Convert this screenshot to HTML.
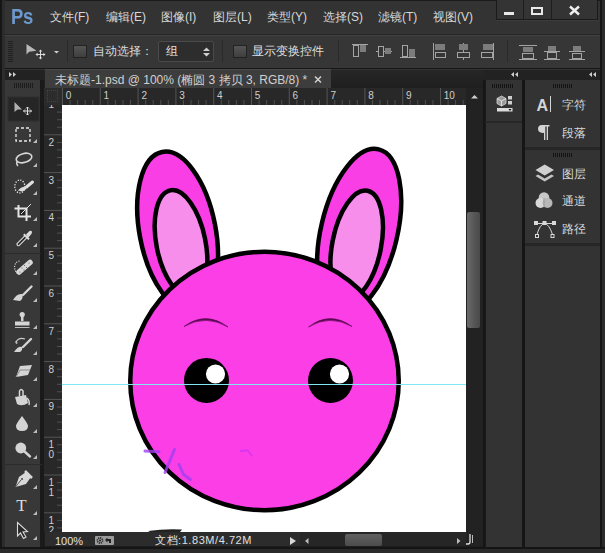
<!DOCTYPE html>
<html><head><meta charset="utf-8">
<style>
*{margin:0;padding:0;box-sizing:border-box}
html,body{width:605px;height:553px;overflow:hidden;background:#1e1e1e;font-family:"Liberation Sans",sans-serif;color:#d6d6d6}
.a{position:absolute}
.t{position:absolute;white-space:nowrap;line-height:1}
.mi{position:absolute;top:11px;font-size:12px;color:#d8d8d8;white-space:nowrap;line-height:1}
svg{position:absolute;overflow:visible}
</style></head><body>
<!-- window frame -->
<div class="a" style="left:0;top:0;width:605px;height:553px;background:#1c1c1c"></div>
<!-- menubar -->
<div class="a" style="left:3px;top:1px;width:598px;height:33px;background:#333"></div>
<div class="a" style="left:3px;top:34px;width:598px;height:1px;background:#262626"></div>
<div class="a" style="left:11px;top:7px;font-size:21.5px;font-weight:bold;color:#6d98cc;letter-spacing:-0.3px;line-height:1;transform:scaleX(0.86);transform-origin:left top">Ps</div>
<div class="mi" style="left:50px">文件(F)</div>
<div class="mi" style="left:106px">编辑(E)</div>
<div class="mi" style="left:161px">图像(I)</div>
<div class="mi" style="left:213px">图层(L)</div>
<div class="mi" style="left:267px">类型(Y)</div>
<div class="mi" style="left:323px">选择(S)</div>
<div class="mi" style="left:378px">滤镜(T)</div>
<div class="mi" style="left:433px">视图(V)</div>
<!-- window buttons -->
<div class="a" style="left:496px;top:0;width:102px;height:20px;background:#343434;border:1px solid #1a1a1a;border-top:none;box-shadow:0 1px 0 #3c3c3c"></div>
<div class="a" style="left:523px;top:0;width:1px;height:19px;background:#1e1e1e"></div>
<div class="a" style="left:551px;top:0;width:1px;height:19px;background:#1e1e1e"></div>
<div class="a" style="left:504px;top:12px;width:10px;height:3px;background:#e8e8e8"></div>
<div class="a" style="left:531px;top:7px;width:12px;height:8px;border:2px solid #e8e8e8;border-top-width:2px"></div>
<svg style="left:569px;top:6px" width="11" height="9"><path d="M1 0.5L10 8.5M10 0.5L1 8.5" stroke="#eee" stroke-width="2.4"/></svg>

<!-- options bar -->
<div class="a" style="left:3px;top:35px;width:598px;height:33px;background:#363636;border-top:1px solid #424242"></div>
<div class="a" style="left:3px;top:68px;width:598px;height:1px;background:#161616"></div>
<svg style="left:8px;top:41px" width="6" height="23"><g fill="#202020"><rect x="0" y="0" width="5" height="1"/><rect x="0" y="2" width="5" height="1"/><rect x="0" y="4" width="5" height="1"/><rect x="0" y="6" width="5" height="1"/><rect x="0" y="8" width="5" height="1"/><rect x="0" y="10" width="5" height="1"/><rect x="0" y="12" width="5" height="1"/><rect x="0" y="14" width="5" height="1"/><rect x="0" y="16" width="5" height="1"/><rect x="0" y="18" width="5" height="1"/><rect x="0" y="20" width="5" height="1"/></g></svg>
<svg style="left:26px;top:43px" width="34" height="16"><path d="M0.5 1L0.5 11.5L3.2 8.8L10.5 7.8Z" fill="#b8b8b8"/><path d="M14.5 7.5V15.5M10.5 11.5H18.5" stroke="#dcdcdc" stroke-width="1"/><path d="M14.5 6.5L16.3 8.6H12.7ZM14.5 16.5L16.3 14.4H12.7ZM9.5 11.5L11.6 9.7V13.3ZM19.5 11.5L17.4 9.7V13.3Z" fill="#dcdcdc"/><path d="M28 8H33L30.5 10.5Z" fill="#cfcfcf"/></svg>
<div class="a" style="left:67px;top:40px;width:1px;height:22px;background:#2a2a2a"></div>
<div class="a" style="left:73px;top:45px;width:14px;height:13px;background:linear-gradient(#555,#3e3e3e);border:1px solid #222"></div>
<div class="t" style="left:93px;top:45px;font-size:12px;color:#dcdcdc">自动选择：</div>
<div class="a" style="left:158px;top:41px;width:56px;height:21px;background:#2d2d2d;border:1px solid #4a4a4a;border-radius:2px"></div>
<div class="t" style="left:166px;top:45px;font-size:12px;color:#e0e0e0">组</div>
<svg style="left:202px;top:47px" width="9" height="10"><path d="M1 4L4.5 0.5L8 4ZM1 6L4.5 9.5L8 6Z" fill="#cfcfcf"/></svg>
<div class="a" style="left:222px;top:40px;width:1px;height:22px;background:#2a2a2a"></div>
<div class="a" style="left:233px;top:45px;width:14px;height:13px;background:linear-gradient(#555,#3e3e3e);border:1px solid #222"></div>
<div class="t" style="left:252px;top:45px;font-size:12px;color:#dcdcdc">显示变换控件</div>
<div class="a" style="left:338px;top:40px;width:1px;height:22px;background:#2a2a2a"></div>
<svg style="left:350px;top:43px" width="250" height="18" fill="none" stroke="#a4a4a4" stroke-width="1">
  <!-- align top -->
  <path d="M2 1.5H18"/><rect x="3.5" y="2.5" width="5" height="11"/><rect x="10" y="2" width="6" height="7" fill="#7c7c7c" stroke="none"/>
  <!-- align vcenter -->
  <path d="M26 8.5H42"/><rect x="28.5" y="3.5" width="5" height="10" fill="#363636"/><rect x="35" y="5" width="6" height="6" fill="#7c7c7c" stroke="none"/>
  <!-- align bottom -->
  <path d="M50 14.5H66"/><rect x="52.5" y="2.5" width="5" height="11"/><rect x="59" y="6" width="6" height="8" fill="#7c7c7c" stroke="none"/>
  <!-- align left -->
  <path d="M83.5 0V17"/><rect x="85" y="1" width="10" height="6" fill="#7c7c7c" stroke="none"/><rect x="85.5" y="9.5" width="10" height="5"/>
  <!-- align hcenter -->
  <path d="M113.5 0V17"/><rect x="109" y="1" width="9" height="6" fill="#7c7c7c" stroke="none"/><rect x="107.5" y="9.5" width="12" height="5" fill="#363636"/>
  <!-- align right -->
  <path d="M143.5 0V17"/><rect x="133" y="1" width="10" height="6" fill="#7c7c7c" stroke="none"/><rect x="131.5" y="9.5" width="11" height="5"/>
  <!-- distribute -->
  <path d="M169 2.5H187M169 16.5H187"/><rect x="173" y="4" width="10" height="5" fill="#7c7c7c" stroke="none"/><rect x="172.5" y="10.5" width="11" height="5"/>
  <path d="M194 8.5H210M194 16.5H210"/><rect x="198" y="3" width="8" height="5" fill="#7c7c7c" stroke="none"/><rect x="197.5" y="9.5" width="9" height="6"/>
  <path d="M219 8.5H235M219 16.5H235"/><rect x="223" y="3" width="8" height="5" fill="#7c7c7c" stroke="none"/><rect x="222.5" y="10.5" width="9" height="5"/>
</svg>
<div class="a" style="left:507px;top:40px;width:1px;height:22px;background:#2a2a2a"></div>

<!-- panel strip -->
<div class="a" style="left:3px;top:69px;width:598px;height:11px;background:#222;border-top:1px solid #333"></div>
<svg style="left:9px;top:72px" width="8" height="6"><path d="M0 0L3 2.5L0 5ZM4 0L7 2.5L4 5Z" fill="#cfcfcf"/></svg>
<svg style="left:510px;top:72px" width="9" height="6"><path d="M8 0L5 2.5L8 5ZM4 0L1 2.5L4 5Z" fill="#cfcfcf"/></svg>
<svg style="left:588px;top:72px" width="9" height="6"><path d="M8 0L5 2.5L8 5ZM4 0L1 2.5L4 5Z" fill="#cfcfcf"/></svg>

<!-- document tab area -->
<div class="a" style="left:44px;top:69px;width:440px;height:19px;background:linear-gradient(#262626,#1f1f1f);border-top:1px solid #333"></div>
<div class="a" style="left:45px;top:69px;width:286px;height:19px;background:#3d3d3d;border-top:1px solid #4a4a4a"></div>
<div class="t" style="left:55px;top:74px;font-size:12px;color:#d0d0d0">未标题-1.psd @ 100% (椭圆 3 拷贝 3, RGB/8) *</div>
<svg style="left:314px;top:76px" width="8" height="7"><path d="M1 0.5L7 6.5M7 0.5L1 6.5" stroke="#d0d0d0" stroke-width="1.5"/></svg>

<!-- rulers -->
<div class="a" id="hr" style="left:44px;top:88px;width:422px;height:17px;background:#282828"></div>
<div class="a" id="vr" style="left:44px;top:105px;width:18px;height:427px;background:#282828"></div>
<svg id="rulers" style="left:0;top:0" width="605" height="553"><g font-family="Liberation Sans"><rect x="62.0" y="88" width="1" height="17" fill="#555"/><rect x="69.6" y="100" width="1" height="5" fill="#505050"/><rect x="77.1" y="100" width="1" height="5" fill="#505050"/><rect x="84.7" y="100" width="1" height="5" fill="#505050"/><rect x="92.2" y="100" width="1" height="5" fill="#505050"/><text x="65.8" y="99" font-size="10" fill="#cfcfcf">0</text><rect x="99.8" y="88" width="1" height="17" fill="#555"/><rect x="107.4" y="100" width="1" height="5" fill="#505050"/><rect x="114.9" y="100" width="1" height="5" fill="#505050"/><rect x="122.5" y="100" width="1" height="5" fill="#505050"/><rect x="130.0" y="100" width="1" height="5" fill="#505050"/><text x="103.6" y="99" font-size="10" fill="#cfcfcf">1</text><rect x="137.6" y="88" width="1" height="17" fill="#555"/><rect x="145.2" y="100" width="1" height="5" fill="#505050"/><rect x="152.7" y="100" width="1" height="5" fill="#505050"/><rect x="160.3" y="100" width="1" height="5" fill="#505050"/><rect x="167.8" y="100" width="1" height="5" fill="#505050"/><text x="141.4" y="99" font-size="10" fill="#cfcfcf">2</text><rect x="175.4" y="88" width="1" height="17" fill="#555"/><rect x="183.0" y="100" width="1" height="5" fill="#505050"/><rect x="190.5" y="100" width="1" height="5" fill="#505050"/><rect x="198.1" y="100" width="1" height="5" fill="#505050"/><rect x="205.6" y="100" width="1" height="5" fill="#505050"/><text x="179.2" y="99" font-size="10" fill="#cfcfcf">3</text><rect x="213.2" y="88" width="1" height="17" fill="#555"/><rect x="220.8" y="100" width="1" height="5" fill="#505050"/><rect x="228.3" y="100" width="1" height="5" fill="#505050"/><rect x="235.9" y="100" width="1" height="5" fill="#505050"/><rect x="243.4" y="100" width="1" height="5" fill="#505050"/><text x="217.0" y="99" font-size="10" fill="#cfcfcf">4</text><rect x="251.0" y="88" width="1" height="17" fill="#555"/><rect x="258.6" y="100" width="1" height="5" fill="#505050"/><rect x="266.1" y="100" width="1" height="5" fill="#505050"/><rect x="273.7" y="100" width="1" height="5" fill="#505050"/><rect x="281.2" y="100" width="1" height="5" fill="#505050"/><text x="254.8" y="99" font-size="10" fill="#cfcfcf">5</text><rect x="288.8" y="88" width="1" height="17" fill="#555"/><rect x="296.4" y="100" width="1" height="5" fill="#505050"/><rect x="303.9" y="100" width="1" height="5" fill="#505050"/><rect x="311.5" y="100" width="1" height="5" fill="#505050"/><rect x="319.0" y="100" width="1" height="5" fill="#505050"/><text x="292.6" y="99" font-size="10" fill="#cfcfcf">6</text><rect x="326.6" y="88" width="1" height="17" fill="#555"/><rect x="334.2" y="100" width="1" height="5" fill="#505050"/><rect x="341.7" y="100" width="1" height="5" fill="#505050"/><rect x="349.3" y="100" width="1" height="5" fill="#505050"/><rect x="356.8" y="100" width="1" height="5" fill="#505050"/><text x="330.4" y="99" font-size="10" fill="#cfcfcf">7</text><rect x="364.4" y="88" width="1" height="17" fill="#555"/><rect x="372.0" y="100" width="1" height="5" fill="#505050"/><rect x="379.5" y="100" width="1" height="5" fill="#505050"/><rect x="387.1" y="100" width="1" height="5" fill="#505050"/><rect x="394.6" y="100" width="1" height="5" fill="#505050"/><text x="368.2" y="99" font-size="10" fill="#cfcfcf">8</text><rect x="402.2" y="88" width="1" height="17" fill="#555"/><rect x="409.8" y="100" width="1" height="5" fill="#505050"/><rect x="417.3" y="100" width="1" height="5" fill="#505050"/><rect x="424.9" y="100" width="1" height="5" fill="#505050"/><rect x="432.4" y="100" width="1" height="5" fill="#505050"/><text x="406.0" y="99" font-size="10" fill="#cfcfcf">9</text><rect x="440.0" y="88" width="1" height="17" fill="#555"/><rect x="447.6" y="100" width="1" height="5" fill="#505050"/><rect x="455.1" y="100" width="1" height="5" fill="#505050"/><rect x="462.7" y="100" width="1" height="5" fill="#505050"/><text x="443.8" y="99" font-size="10" fill="#cfcfcf">10</text><rect x="54.4" y="100" width="1" height="5" fill="#505050"/><rect x="46.9" y="100" width="1" height="5" fill="#505050"/><rect x="57" y="111.6" width="5" height="1" fill="#505050"/><rect x="57" y="119.2" width="5" height="1" fill="#505050"/><rect x="57" y="126.7" width="5" height="1" fill="#505050"/><text x="48.5" y="108.0" font-size="10" fill="#cfcfcf">1</text><rect x="44" y="134.3" width="18" height="1" fill="#555"/><rect x="57" y="141.9" width="5" height="1" fill="#505050"/><rect x="57" y="149.4" width="5" height="1" fill="#505050"/><rect x="57" y="157.0" width="5" height="1" fill="#505050"/><rect x="57" y="164.5" width="5" height="1" fill="#505050"/><text x="48.5" y="145.8" font-size="10" fill="#cfcfcf">2</text><rect x="44" y="172.1" width="18" height="1" fill="#555"/><rect x="57" y="179.7" width="5" height="1" fill="#505050"/><rect x="57" y="187.2" width="5" height="1" fill="#505050"/><rect x="57" y="194.8" width="5" height="1" fill="#505050"/><rect x="57" y="202.3" width="5" height="1" fill="#505050"/><text x="48.5" y="183.6" font-size="10" fill="#cfcfcf">3</text><rect x="44" y="209.9" width="18" height="1" fill="#555"/><rect x="57" y="217.5" width="5" height="1" fill="#505050"/><rect x="57" y="225.0" width="5" height="1" fill="#505050"/><rect x="57" y="232.6" width="5" height="1" fill="#505050"/><rect x="57" y="240.1" width="5" height="1" fill="#505050"/><text x="48.5" y="221.4" font-size="10" fill="#cfcfcf">4</text><rect x="44" y="247.7" width="18" height="1" fill="#555"/><rect x="57" y="255.3" width="5" height="1" fill="#505050"/><rect x="57" y="262.8" width="5" height="1" fill="#505050"/><rect x="57" y="270.4" width="5" height="1" fill="#505050"/><rect x="57" y="277.9" width="5" height="1" fill="#505050"/><text x="48.5" y="259.2" font-size="10" fill="#cfcfcf">5</text><rect x="44" y="285.5" width="18" height="1" fill="#555"/><rect x="57" y="293.1" width="5" height="1" fill="#505050"/><rect x="57" y="300.6" width="5" height="1" fill="#505050"/><rect x="57" y="308.2" width="5" height="1" fill="#505050"/><rect x="57" y="315.7" width="5" height="1" fill="#505050"/><text x="48.5" y="297.0" font-size="10" fill="#cfcfcf">6</text><rect x="44" y="323.3" width="18" height="1" fill="#555"/><rect x="57" y="330.9" width="5" height="1" fill="#505050"/><rect x="57" y="338.4" width="5" height="1" fill="#505050"/><rect x="57" y="346.0" width="5" height="1" fill="#505050"/><rect x="57" y="353.5" width="5" height="1" fill="#505050"/><text x="48.5" y="334.8" font-size="10" fill="#cfcfcf">7</text><rect x="44" y="361.1" width="18" height="1" fill="#555"/><rect x="57" y="368.7" width="5" height="1" fill="#505050"/><rect x="57" y="376.2" width="5" height="1" fill="#505050"/><rect x="57" y="383.8" width="5" height="1" fill="#505050"/><rect x="57" y="391.3" width="5" height="1" fill="#505050"/><text x="48.5" y="372.6" font-size="10" fill="#cfcfcf">8</text><rect x="44" y="398.9" width="18" height="1" fill="#555"/><rect x="57" y="406.5" width="5" height="1" fill="#505050"/><rect x="57" y="414.0" width="5" height="1" fill="#505050"/><rect x="57" y="421.6" width="5" height="1" fill="#505050"/><rect x="57" y="429.1" width="5" height="1" fill="#505050"/><text x="48.5" y="410.4" font-size="10" fill="#cfcfcf">9</text><rect x="44" y="436.7" width="18" height="1" fill="#555"/><rect x="57" y="444.3" width="5" height="1" fill="#505050"/><rect x="57" y="451.8" width="5" height="1" fill="#505050"/><rect x="57" y="459.4" width="5" height="1" fill="#505050"/><rect x="57" y="466.9" width="5" height="1" fill="#505050"/><text x="48.5" y="448.2" font-size="10" fill="#cfcfcf">1</text><text x="48.5" y="458.2" font-size="10" fill="#cfcfcf">0</text><rect x="44" y="474.5" width="18" height="1" fill="#555"/><rect x="57" y="482.1" width="5" height="1" fill="#505050"/><rect x="57" y="489.6" width="5" height="1" fill="#505050"/><rect x="57" y="497.2" width="5" height="1" fill="#505050"/><rect x="57" y="504.7" width="5" height="1" fill="#505050"/><text x="48.5" y="486.0" font-size="10" fill="#cfcfcf">1</text><text x="48.5" y="496.0" font-size="10" fill="#cfcfcf">1</text><rect x="44" y="512.3" width="18" height="1" fill="#555"/><rect x="57" y="519.9" width="5" height="1" fill="#505050"/><rect x="57" y="527.4" width="5" height="1" fill="#505050"/><text x="48.5" y="523.8" font-size="10" fill="#cfcfcf">1</text><text x="48.5" y="533.8" font-size="10" fill="#cfcfcf">2</text></g></svg>

<div class="a" style="left:44px;top:88px;width:18px;height:17px;background:#2c2c2c"><div class="a" style="left:3px;top:2px;width:11px;height:12px;border:1px dotted #444"></div></div>
<!-- canvas -->
<div id="canvas" class="a" style="left:62px;top:105px;width:404px;height:427px;background:#fff;overflow:hidden"><svg width="404" height="427" viewBox="62 105 404 427" style="position:absolute;left:0;top:0">
<g stroke="#000" stroke-width="4.5">
<ellipse cx="177.6" cy="231.3" rx="38" ry="80.8" transform="rotate(-11 177.6 231.3)" fill="#fa3ee6"/>
<ellipse cx="181" cy="243.5" rx="24.5" ry="54.2" transform="rotate(-11.4 181 243.5)" fill="#f88eec"/>
<ellipse cx="359.2" cy="231.3" rx="38.2" ry="84.2" transform="rotate(13.4 359.2 231.3)" fill="#fa3ee6"/>
<ellipse cx="356.7" cy="245" rx="24.4" ry="55.3" transform="rotate(11.2 356.7 245)" fill="#f88eec"/>
<ellipse cx="264.5" cy="381" rx="134.25" ry="129.25" fill="#fb3ee6"/>
</g>
<circle cx="206.5" cy="380.4" r="22.5" fill="#000"/>
<circle cx="330.5" cy="380.5" r="22.5" fill="#000"/>
<circle cx="215.5" cy="374" r="9.6" fill="#fff"/>
<circle cx="339.5" cy="374" r="9.6" fill="#fff"/>
<path d="M184 326.5Q205.8 310.5 228 327Q205.8 314 184 326.5Z" fill="#5a0a52" stroke="#5a0a52" stroke-width="0.6"/>
<path d="M308.5 327Q329.8 310.5 352 326.5Q329.8 314 308.5 327Z" fill="#5a0a52" stroke="#5a0a52" stroke-width="0.6"/>
<filter id="bl"><feGaussianBlur stdDeviation="0.7"/></filter><g stroke="#a040f0" stroke-width="3" fill="none" stroke-linecap="round" stroke-linejoin="round" filter="url(#bl)" opacity="0.8">
<path d="M145 451L159 451.8"/><path d="M174.5 449.5Q171 458 165 472.5"/><path d="M179 464.5L183.5 474.5L190.5 479.5"/>
<path d="M240.6 451L247.5 450.3L251.8 455.5" stroke="#c830f0" stroke-width="1.8" opacity="0.8"/>
</g>
<path d="M148 531Q165 528.5 182 529.5L180 532H150Z" fill="#222"/>
<line x1="62" y1="384.5" x2="466" y2="384.5" stroke="#7fe8f2" stroke-width="1"/>
</svg></div>

<!-- vertical scrollbar -->
<div class="a" style="left:466px;top:88px;width:17px;height:458px;background:#222"></div>
<svg style="left:471px;top:95px" width="7" height="4"><path d="M0 3.5L3.5 0L7 3.5Z" fill="#d0d0d0"/></svg>
<div class="a" style="left:467px;top:212px;width:13px;height:116px;background:linear-gradient(90deg,#6a6a6a,#555 60%,#4a4a4a);border-radius:2px"></div>
<div class="a" style="left:483px;top:80px;width:2px;height:473px;background:#161616"></div>

<!-- status bar -->
<div class="a" style="left:45px;top:532px;width:421px;height:14px;background:#2c2c2c"></div>
<div class="t" style="left:55px;top:536px;font-size:11px;color:#e0e0e0">100%</div>
<div class="a" style="left:95px;top:536px;width:19px;height:9px;background:#9c9c9c;border-radius:1px"></div>
<svg style="left:95px;top:536px" width="19" height="9"><circle cx="5" cy="4.5" r="2.6" fill="none" stroke="#222" stroke-width="1.6" stroke-dasharray="1.2 0.8"/><circle cx="5" cy="4.5" r="1" fill="#222"/><path d="M10 4L12.5 1.5V3H16V7H14V5H12.5V6.5Z" fill="#222"/></svg>
<div class="t" style="left:155px;top:535px;font-size:11px;color:#e0e0e0;letter-spacing:0.55px">文档:1.83M/4.72M</div>
<svg style="left:290px;top:537px" width="7" height="8"><path d="M0 0L6 4L0 8Z" fill="#d8d8d8"/></svg>
<div class="a" style="left:300px;top:532px;width:166px;height:14px;background:#262626"></div>
<svg style="left:305px;top:538px" width="4" height="6"><path d="M3.5 0L0 3L3.5 6Z" fill="#bbb"/></svg>
<div class="a" style="left:345px;top:534px;width:37px;height:12px;background:linear-gradient(#606060,#4c4c4c);border-radius:2px"></div>
<svg style="left:457px;top:538px" width="4" height="6"><path d="M0 0L3.5 3L0 6Z" fill="#bbb"/></svg>
<div class="a" style="left:45px;top:546px;width:438px;height:7px;background:#1e1e1e"></div>

<!-- tools panel -->
<div class="a" style="left:4px;top:80px;width:37px;height:473px;background:#383838;border-left:1px solid #444"></div>
<div class="a" style="left:40px;top:80px;width:4px;height:473px;background:#1a1a1a"></div>
<svg id="tools" style="left:0;top:0" width="50" height="553">
<rect x="8" y="97" width="31" height="24" fill="#262626" stroke="#2e2e2e"/>
<path d="M14.5 102V112L17.5 109.5L22 109.5Z" fill="#b0b0b0"/>
<g stroke="#e0e0e0" stroke-width="1" fill="none"><path d="M27.5 107V115M23.5 111H31.5"/><path d="M26 108.5L27.5 107L29 108.5M26 113.5L27.5 115L29 113.5M25 109.5L23.5 111L25 112.5M30 109.5L31.5 111L30 112.5"/></g>
<rect x="16" y="128" width="14" height="13" fill="none" stroke="#e8e8e8" stroke-width="1.3" stroke-dasharray="3 2"/>
<ellipse cx="24" cy="158" rx="8" ry="4.5" transform="rotate(-15 24 158)" fill="none" stroke="#d8d8d8" stroke-width="1.6"/>
<path d="M17 161.5Q16 164 18 166" stroke="#d8d8d8" stroke-width="1.4" fill="none"/>
<ellipse cx="19.8" cy="186.5" rx="5" ry="6.5" fill="none" stroke="#f0f0f0" stroke-width="1.3" stroke-dasharray="1.2 1.5"/>
<path d="M32.5 182L26.5 187" stroke="#e0e0e0" stroke-width="3" stroke-linecap="round"/><path d="M18 190.5Q21 186.5 26.5 186.5Q27 190 22 191.5Z" fill="#dcdcdc"/>
<rect x="19" y="209" width="7" height="7" fill="#222"/><g stroke="#e4e4e4" stroke-width="2" fill="none"><path d="M18.5 205V216.5H31M14.5 208.5H26.5V221"/><path d="M21 214L31 204" stroke-width="1"/></g>
<path d="M17.5 245.5L16.8 243.8L25 235.6L27 237.6L18.8 245.8Z" fill="#2a2a2a" stroke="#dcdcdc" stroke-width="1.1" stroke-linejoin="round"/><path d="M23.8 234.2L29 239.4" stroke="#dcdcdc" stroke-width="2"/><path d="M26 234.5L29.5 231Q31.5 230 32 232Q32 233 31 234.5L28 238Z" fill="#dcdcdc"/>
<rect x="5" y="253" width="36" height="1" fill="#2a2a2a"/>
<path d="M19.5 261Q15 262 14.5 267Q15 271.5 17 273" stroke="#e0e0e0" stroke-width="1.1" stroke-dasharray="1.1 1.3" fill="none"/>
<path d="M19 272L30 262.5" stroke="#d8d8d8" stroke-width="5.5" stroke-linecap="round"/>
<g fill="#555"><circle cx="24.5" cy="265.5" r="0.6"/><circle cx="26.5" cy="267.5" r="0.6"/><circle cx="22" cy="268" r="0.6"/><circle cx="24" cy="270" r="0.6"/><circle cx="29" cy="263" r="0.6"/><circle cx="20" cy="272" r="0.6"/></g>
<path d="M31.5 286.5L23 295" stroke="#d4d4d4" stroke-width="2.4" stroke-linecap="round"/><path d="M13 300Q17 293 22 294Q24 298 20 301Z" fill="#d4d4d4"/>
<circle cx="22.2" cy="314.5" r="2.6" fill="#d4d4d4"/><path d="M21 316H23.5V321H21Z" fill="#d4d4d4"/><rect x="15" y="321.5" width="14.5" height="4" fill="#d4d4d4"/><rect x="15" y="327" width="14.5" height="1" fill="#bbb"/>
<path d="M16 342Q19 337 25 339" stroke="#ccc" stroke-width="1.3" fill="none"/><path d="M15 341L18 343L16 344Z" fill="#ccc"/>
<path d="M31 339L23 347" stroke="#d4d4d4" stroke-width="2.4" stroke-linecap="round"/><path d="M14 352Q18 346 22 347Q23 350 20 352Z" fill="#d4d4d4"/>
<path d="M20 366L32 365L28 375L16 377Z" fill="#d4d4d4"/><path d="M16 377L20 370H30" stroke="#8a8a8a" stroke-width="1" fill="none"/>
<path d="M19.5 396V391Q21 388 23 391V396" stroke="#d8d8d8" stroke-width="1.5" fill="none"/>
<path d="M15 397L26 395L28 403Q22 407 17 404Z" fill="#d4d4d4"/><path d="M27 398Q30 401 29 405" stroke="#d4d4d4" stroke-width="1.5" fill="none"/>
<path d="M22 416Q28 424 28 426Q28 431 22 431Q16 431 16 426Q16 424 22 416Z" fill="#d4d4d4"/>
<circle cx="20.8" cy="448" r="5.4" fill="#d4d4d4"/><path d="M24 451L30 456.5" stroke="#d4d4d4" stroke-width="2.4" stroke-linecap="round"/>
<rect x="5" y="464" width="37" height="1" fill="#2c2c2c"/>
<path d="M15.5 487L19 477L26 472L31 477L26 484Z" fill="#d8d8d8"/><path d="M25 471L32 478" stroke="#d8d8d8" stroke-width="2.5"/><path d="M15.5 487L21 480" stroke="#555" stroke-width="1"/><circle cx="22" cy="479" r="1" fill="#444"/>
<text x="16.3" y="511" font-family="Liberation Serif" font-size="17" fill="#dcdcdc">T</text>
<path d="M17.5 522.5V536L20.5 533L23.5 538.5L26 537L23 532L27.5 531.5Z" fill="#2a2a2a" stroke="#dcdcdc" stroke-width="1.1"/>
<g fill="#bdbdbd"><path d="M37 139V143H33Z"/><path d="M37 163V167H33Z"/><path d="M37 191V195H33Z"/><path d="M37 217V221H33Z"/><path d="M37 243V247H33Z"/><path d="M37 271V275H33Z"/><path d="M37 298V302H33Z"/><path d="M37 325V329H33Z"/><path d="M37 351V355H33Z"/><path d="M37 377V381H33Z"/><path d="M37 403V407H33Z"/><path d="M37 429V433H33Z"/><path d="M37 455V459H33Z"/><path d="M37 485V489H33Z"/><path d="M37 511V515H33Z"/><path d="M37 536V540H33Z"/></g>
<g fill="#1c1c1c"><rect x="14" y="83" width="1" height="5"/><rect x="16" y="83" width="1" height="5"/><rect x="18" y="83" width="1" height="5"/><rect x="20" y="83" width="1" height="5"/><rect x="22" y="83" width="1" height="5"/><rect x="24" y="83" width="1" height="5"/><rect x="26" y="83" width="1" height="5"/><rect x="28" y="83" width="1" height="5"/><rect x="30" y="83" width="1" height="5"/><rect x="32" y="83" width="1" height="5"/></g>
</svg>

<!-- right panels -->
<div class="a" style="left:485px;top:80px;width:37px;height:473px;background:#333;border-left:1px solid #1a1a1a"></div>
<div class="a" style="left:485px;top:121px;width:37px;height:2px;background:#262626"></div>
<div class="a" style="left:522px;top:80px;width:3px;height:473px;background:#161616"></div>
<div class="a" style="left:525px;top:80px;width:76px;height:473px;background:#333"></div>
<div class="a" style="left:525px;top:147px;width:76px;height:3px;background:#262626"></div>
<div class="a" style="left:525px;top:243px;width:76px;height:3px;background:#262626"></div>
<svg id="rp" style="left:0;top:0" width="605" height="553"><rect x="492" y="84" width="1" height="4" fill="#141414"/><rect x="494" y="84" width="1" height="4" fill="#141414"/><rect x="496" y="84" width="1" height="4" fill="#141414"/><rect x="498" y="84" width="1" height="4" fill="#141414"/><rect x="500" y="84" width="1" height="4" fill="#141414"/><rect x="502" y="84" width="1" height="4" fill="#141414"/><rect x="504" y="84" width="1" height="4" fill="#141414"/><rect x="506" y="84" width="1" height="4" fill="#141414"/><rect x="508" y="84" width="1" height="4" fill="#141414"/><rect x="510" y="84" width="1" height="4" fill="#141414"/><rect x="512" y="84" width="1" height="4" fill="#141414"/><rect x="553" y="84" width="1" height="4" fill="#141414"/><rect x="555" y="84" width="1" height="4" fill="#141414"/><rect x="557" y="84" width="1" height="4" fill="#141414"/><rect x="559" y="84" width="1" height="4" fill="#141414"/><rect x="561" y="84" width="1" height="4" fill="#141414"/><rect x="563" y="84" width="1" height="4" fill="#141414"/><rect x="565" y="84" width="1" height="4" fill="#141414"/><rect x="567" y="84" width="1" height="4" fill="#141414"/><rect x="569" y="84" width="1" height="4" fill="#141414"/><rect x="571" y="84" width="1" height="4" fill="#141414"/><rect x="553" y="153" width="1" height="4" fill="#141414"/><rect x="555" y="153" width="1" height="4" fill="#141414"/><rect x="557" y="153" width="1" height="4" fill="#141414"/><rect x="559" y="153" width="1" height="4" fill="#141414"/><rect x="561" y="153" width="1" height="4" fill="#141414"/><rect x="563" y="153" width="1" height="4" fill="#141414"/><rect x="565" y="153" width="1" height="4" fill="#141414"/><rect x="567" y="153" width="1" height="4" fill="#141414"/><rect x="569" y="153" width="1" height="4" fill="#141414"/><rect x="571" y="153" width="1" height="4" fill="#141414"/><g>
<path d="M501.5 96L506 98.5V103.5L501.5 106L497 103.5V98.5Z" fill="#9a9a9a" stroke="#d8d8d8" stroke-width="0.8"/>
<path d="M497 98.5L501.5 101L506 98.5M501.5 101V106" stroke="#eee" stroke-width="0.8" fill="none"/>
<rect x="508" y="96" width="4" height="3.5" fill="#cfcfcf"/><rect x="508" y="101" width="4" height="3.5" fill="#cfcfcf"/>
<rect x="497" y="108" width="15.5" height="3.5" fill="#dcdcdc"/><path d="M508.5 109L511.5 109L510 111Z" fill="#111"/>
</g>
<text x="536.5" y="110.5" font-family="Liberation Sans" font-weight="bold" font-size="16" fill="#d4d4d4">A</text>
<rect x="550" y="96" width="1" height="16" fill="#d4d4d4"/>
<path d="M542 125H549.5V126.5H548V140H546.7V126.5H545.3V140H544V133Q538 133 538 129Q538 125 542 125Z" fill="#d4d4d4"/>
<path d="M544.7 164.5L554 170L544.7 175.5L535.5 170Z" fill="#d0d0d0"/>
<path d="M538 174.5L544.7 178.5L551.5 174.5L554 176L544.7 181.5L535.5 176Z" fill="#c4c4c4"/>
<circle cx="544" cy="197.5" r="5.3" fill="#c8c8c8"/><circle cx="540.5" cy="203" r="5" fill="#d8d8d8"/><circle cx="547.5" cy="203" r="5" fill="#b8b8b8"/>
<path d="M544 198L544 208" stroke="#777" stroke-width="1" opacity="0.5"/>
<g stroke="#d8d8d8" stroke-width="1" fill="none">
<path d="M537 223.5H553"/><path d="M537 234.5Q540 224 544.5 223.5Q549 224 552.5 234.5"/>
<rect x="534.5" y="221.5" width="3" height="3" fill="#d8d8d8"/><rect x="543" y="221.5" width="3" height="3" fill="#d8d8d8"/><rect x="552.5" y="221.5" width="3" height="3" fill="#d8d8d8"/>
<rect x="535.5" y="234.5" width="3" height="3"/><rect x="551" y="234.5" width="3" height="3"/>
</g>
</svg>
<div class="t" style="left:562px;top:99px;font-size:12px;color:#d8d8d8">字符</div>
<div class="t" style="left:562px;top:127px;font-size:12px;color:#d8d8d8">段落</div>
<div class="t" style="left:562px;top:168px;font-size:12px;color:#d8d8d8">图层</div>
<div class="t" style="left:562px;top:195px;font-size:12px;color:#d8d8d8">通道</div>
<div class="t" style="left:562px;top:223px;font-size:12px;color:#d8d8d8">路径</div>
<div class="a" style="left:600px;top:0;width:5px;height:553px;background:#2c2c2c;border-left:2px solid #161616"></div>
<div class="a" style="left:0;top:0;width:5px;height:553px;background:#2c2c2c;border-left:2px solid #161616"></div>
<div class="a" style="left:0;top:547px;width:605px;height:6px;background:#2a2a2a;border-top:2px solid #151515"></div>
<svg style="left:464px;top:533px" width="10" height="12"><path d="M6 1V9Q6 11 4 11H2" stroke="#e0e0e0" stroke-width="1.3" fill="none"/><path d="M8.5 2V10" stroke="#bbb" stroke-width="1"/></svg>
</body></html>
